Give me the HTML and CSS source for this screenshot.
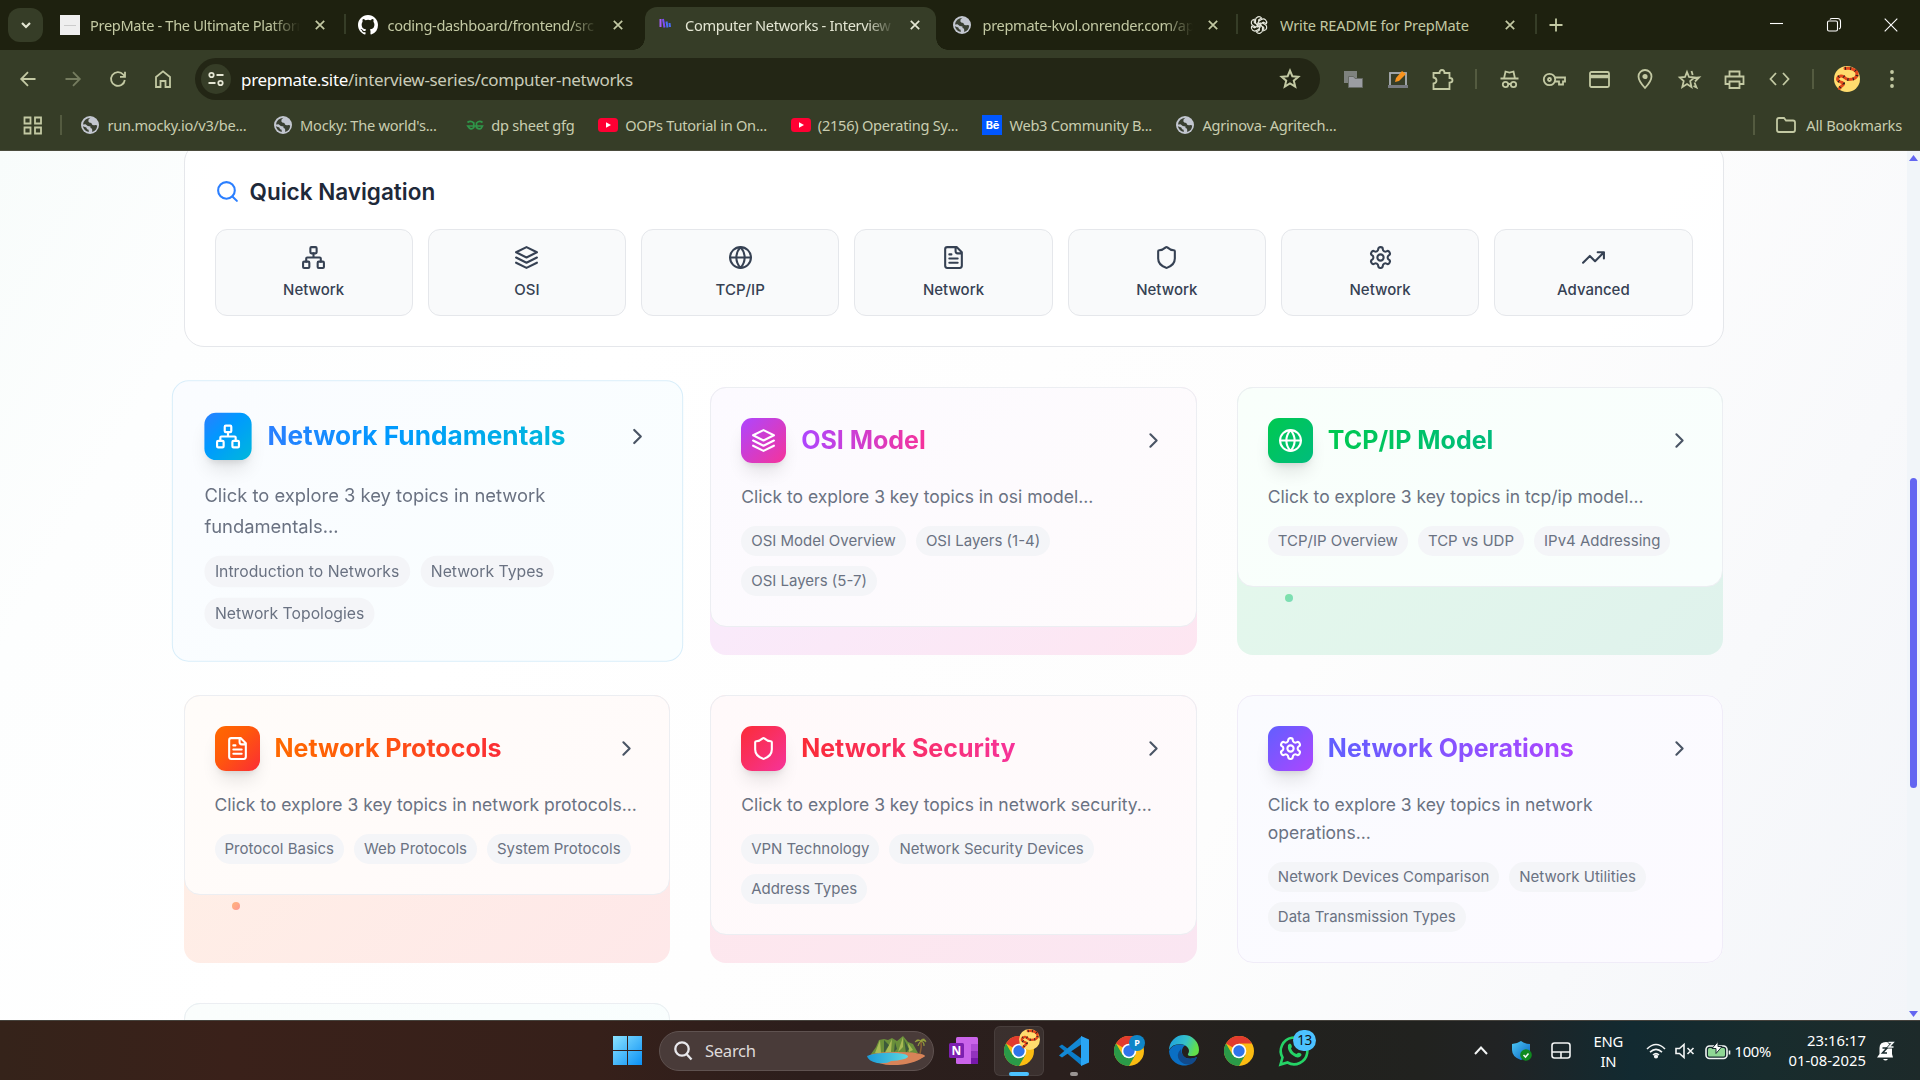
FILE: index.html
```html
<!DOCTYPE html>
<html lang="en">
<head>
<meta charset="utf-8">
<title>Computer Networks - Interview Series</title>
<link rel="stylesheet" href="styles.css">
</head>
<body>
<svg class="defs" aria-hidden="true">
  <defs>
    <linearGradient id="g-win" x1="0" y1="0" x2="1" y2="1"><stop offset="0" stop-color="#8be3ff"/><stop offset="1" stop-color="#0a90f5"/></linearGradient>
    <linearGradient id="g-edge" x1="0" y1="0" x2="1" y2="0.3"><stop offset="0" stop-color="#1b9de2"/><stop offset=".6" stop-color="#35c1c9"/><stop offset="1" stop-color="#62e04a"/></linearGradient>
    <linearGradient id="g-shield" x1="0" y1="0" x2="1" y2="1"><stop offset="0" stop-color="#4cc8f5"/><stop offset="1" stop-color="#0a62c0"/></linearGradient>
    <linearGradient id="g-lake" x1="0" y1="0" x2="1" y2="0"><stop offset="0" stop-color="#1a9bd8"/><stop offset="1" stop-color="#5fd8e0"/></linearGradient>
  </defs>
  <symbol id="network" viewBox="0 0 24 24"><rect x="16" y="16" width="6" height="6" rx="1"/><rect x="2" y="16" width="6" height="6" rx="1"/><rect x="9" y="2" width="6" height="6" rx="1"/><path d="M5 16v-3a1 1 0 0 1 1-1h12a1 1 0 0 1 1 1v3M12 12V8"/></symbol>
  <symbol id="layers" viewBox="0 0 24 24"><path d="M12 2 2 7l10 5 10-5-10-5ZM2 17l10 5 10-5M2 12l10 5 10-5"/></symbol>
  <symbol id="globe" viewBox="0 0 24 24"><circle cx="12" cy="12" r="10"/><path d="M2 12h20M12 2a15.3 15.3 0 0 1 4 10 15.3 15.3 0 0 1-4 10 15.3 15.3 0 0 1-4-10 15.3 15.3 0 0 1 4-10z"/></symbol>
  <symbol id="file" viewBox="0 0 24 24"><path d="M15 2H6a2 2 0 0 0-2 2v16a2 2 0 0 0 2 2h12a2 2 0 0 0 2-2V7ZM14 2v4a2 2 0 0 0 2 2h4M10 9H8M16 13H8M16 17H8"/></symbol>
  <symbol id="shield" viewBox="0 0 24 24"><path d="M20 13c0 5-3.5 7.5-7.66 8.95a1 1 0 0 1-.67-.01C7.5 20.5 4 18 4 13V6a1 1 0 0 1 1-1c2 0 4.5-1.2 6.24-2.72a1.17 1.17 0 0 1 1.52 0C14.51 3.81 17 5 19 5a1 1 0 0 1 1 1z"/></symbol>
  <symbol id="gear" viewBox="0 0 24 24"><path d="M12.22 2h-.44a2 2 0 0 0-2 2v.18a2 2 0 0 1-1 1.73l-.43.25a2 2 0 0 1-2 0l-.15-.08a2 2 0 0 0-2.73.73l-.22.38a2 2 0 0 0 .73 2.73l.15.1a2 2 0 0 1 1 1.72v.51a2 2 0 0 1-1 1.74l-.15.09a2 2 0 0 0-.73 2.73l.22.38a2 2 0 0 0 2.73.73l.15-.08a2 2 0 0 1 2 0l.43.25a2 2 0 0 1 1 1.73V20a2 2 0 0 0 2 2h.44a2 2 0 0 0 2-2v-.18a2 2 0 0 1 1-1.73l.43-.25a2 2 0 0 1 2 0l.15.08a2 2 0 0 0 2.73-.73l.22-.39a2 2 0 0 0-.73-2.73l-.15-.08a2 2 0 0 1-1-1.74v-.5a2 2 0 0 1 1-1.74l.15-.09a2 2 0 0 0 .73-2.73l-.22-.38a2 2 0 0 0-2.73-.73l-.15.08a2 2 0 0 1-2 0l-.43-.25a2 2 0 0 1-1-1.73V4a2 2 0 0 0-2-2z"/><circle cx="12" cy="12" r="3"/></symbol>
  <symbol id="trend" viewBox="0 0 24 24"><path d="m22 7-8.5 8.5-5-5L2 17M16 7h6v6"/></symbol>
  <symbol id="search" viewBox="0 0 24 24"><circle cx="11" cy="11" r="8"/><path d="m21 21-4.3-4.3"/></symbol>
  <symbol id="chevron" viewBox="0 0 24 24"><path d="m9 18 6-6-6-6"/></symbol>
  <symbol id="x" viewBox="0 0 10 10"><path d="m.8.8 8.4 8.4M9.2.8.8 9.2"/></symbol>
  <symbol id="world" viewBox="0 0 18 18"><circle cx="9" cy="9" r="9" fill="#c3c7d0" stroke="none"/><path d="M9.500 1.800Q7 3 7.300 5.200q.4 1.700 3 1.800.6 2.600 3 2.300 1.700-.5 2.900.2-.3 5-5 6.500v-2.200q0-1.400-1.700-1.700V10.500q-3 0-5-2.300L2 8.500Q2.800 2.500 9.500 1.800zM1.900 10.200l3.400 1.200q.5 2.200 2.300 2.300l.2 2.300Q2.800 15 1.900 10.200z" fill="#3a4032" stroke="none"/></symbol>
  <symbol id="yt" viewBox="0 0 20 14"><rect width="20" height="14" rx="3.500" fill="#f03" stroke="none"/><path d="M8 4.200v5.600L13 7z" fill="#fff" stroke="none"/></symbol>
  <symbol id="chrome" viewBox="0 0 30 30"><circle cx="15" cy="15" r="15" fill="#fbbc12"/><path d="M15 15 2 7.500A15 15 0 0 1 28 7.500H15z" fill="#e23b2e"/><path d="M2 7.500A15 15 0 0 0 15 30l6.500-11.200L15 15 8.500 18.700z" fill="#2a9a48"/><circle cx="15" cy="15" r="7.300" fill="#fff"/><circle cx="15" cy="15" r="5.700" fill="#2f74ea"/></symbol>
  <symbol id="snake" viewBox="0 0 26 26"><circle cx="13" cy="13" r="13" fill="#ffdc6e" stroke="none"/><path d="M11 2.500c5-1 11.500 1 12 5s-3 6-8 6-4-4-8-3.500-4.500 4-1.500 5.500 4 1 4 2.500-3 2-4 4.500" fill="none" stroke="#e2481c" stroke-width="3" stroke-linecap="round"/><path d="M11 2.500c5-1 11.500 1 12 5s-3 6-8 6-4-4-8-3.500-4.500 4-1.500 5.500 4 1 4 2.500-3 2-4 4.500" fill="none" stroke="#26221f" stroke-width="3" stroke-dasharray="1 4.200"/></symbol>
</svg>

<header class="browser">
  <div class="tabstrip">
    <div class="tab-search"><svg width="10" height="7" viewBox="0 0 10 7"><path d="m1 1 4 4 4-4"/></svg></div>
    <div class="tab"><span class="fav"><span class="blank-fav"></span></span><span class="title">PrepMate - The Ultimate Platform</span><svg class="close"><use href="#x"/></svg></div>
    <div class="tab split"><span class="fav"><svg class="solid" width="20" height="20" viewBox="0 0 16 16"><path fill="#fff" d="M8 0C3.580 0 0 3.580 0 8c0 3.540 2.290 6.530 5.470 7.590.4.070.55-.17.55-.38 0-.19-.01-.82-.01-1.490-2.010.37-2.530-.49-2.690-.94-.09-.23-.48-.94-.82-1.130-.28-.15-.68-.52-.01-.53.63-.01 1.080.58 1.230.82.72 1.210 1.870.87 2.330.66.07-.52.28-.87.51-1.070-1.780-.2-3.640-.89-3.640-3.950 0-.87.31-1.590.82-2.150-.08-.2-.36-1.020.08-2.120 0 0 .67-.21 2.200.82a7.600 7.600 0 0 1 4 0c1.530-1.040 2.200-.82 2.200-.82.44 1.100.16 1.920.08 2.120.51.56.82 1.270.82 2.150 0 3.070-1.870 3.750-3.650 3.950.29.25.54.73.54 1.480 0 1.070-.01 1.930-.01 2.200 0 .21.15.46.55.38A8 8 0 0 0 16 8c0-4.420-3.580-8-8-8z"/></svg></span><span class="title">coding-dashboard/frontend/src at</span><svg class="close"><use href="#x"/></svg></div>
    <div class="tab active"><span class="fav"><svg width="14" height="18" viewBox="0 0 14 18"><path d="M1.500 3v8" stroke="#a45cf5" stroke-width="2"/><path d="m4 3 1.500 8.500" stroke="#7a4df5" stroke-width="2"/><path d="m7.500 5.500 1 6M10.500 7l.5 4" stroke="#4a6cf5" stroke-width="2"/></svg></span><span class="title">Computer Networks - Interview Series</span><svg class="close"><use href="#x"/></svg></div>
    <div class="tab"><span class="fav"><svg width="18" height="18"><use href="#world"/></svg></span><span class="title">prepmate-kvol.onrender.com/api/</span><svg class="close"><use href="#x"/></svg></div>
    <div class="tab split"><span class="fav"><svg width="18" height="18" viewBox="-9 -9 18 18"><g fill="none" stroke="#e8eadf" stroke-width="1.200"><path id="petal" d="M-3.500-1.800V-5A3.400 3.400 0 0 1 2.600-7L-.3-5.200V-1.500L3 .5"/><use href="#petal" transform="rotate(60)"/><use href="#petal" transform="rotate(120)"/><use href="#petal" transform="rotate(180)"/><use href="#petal" transform="rotate(240)"/><use href="#petal" transform="rotate(300)"/></g></svg></span><span class="title full">Write README for PrepMate</span><svg class="close"><use href="#x"/></svg></div>
    <div class="newtab"><svg width="14" height="14" viewBox="0 0 14 14"><path d="M7 .5v13M.5 7h13"/></svg></div>
    <div class="winctl">
      <svg width="14" height="14" viewBox="0 0 14 14"><path d="M0 5.500h13"/></svg>
      <svg width="14" height="14" viewBox="0 0 14 14"><rect x=".5" y="3" width="10" height="10" rx="1.500"/><path d="M3 1.500Q3.500.5 5 .5h5.500q3 0 3 3V9q0 1.500-1.500 2"/></svg>
      <svg width="14" height="14" viewBox="0 0 14 14"><path d="m.7.7 12.600 12.600M13.300.7.7 13.300"/></svg>
    </div>
  </div>

  <div class="toolbar">
    <div class="navs">
      <span><svg width="16" height="16" viewBox="0 0 16 16"><path d="M15.500 8H1.500M8 1.200 1.200 8 8 14.800"/></svg></span>
      <span class="dim"><svg width="16" height="16" viewBox="0 0 16 16"><path d="M.5 8h14M8 1.200 14.800 8 8 14.800"/></svg></span>
      <span><svg width="16" height="16" viewBox="0 0 16 16"><path d="M14.800 9A6.900 6.900 0 1 1 13.200 3.500L15 5.500M15 .8v5h-5"/></svg></span>
      <span><svg width="16" height="18" viewBox="0 0 16 18"><path d="M1 7l7-5.700L15 7v10h-4.500v-6h-5v6H1z"/></svg></span>
    </div>
    <div class="omnibox">
      <span class="siteinfo"><svg width="16" height="16" viewBox="0 0 16 16"><circle cx="3.500" cy="4" r="2.200"/><circle cx="12.500" cy="12" r="2.200"/><path d="M8.500 4H15.500M.5 12h7"/></svg></span>
      <span class="url"><b>prepmate.site</b>/interview-series/computer-networks</span>
      <svg class="star" width="20" height="20" viewBox="0 0 18 18"><path d="m9 1.500 2.100 5 5.400.5-4.100 3.500 1.300 5.300L9 13l-4.700 2.800 1.300-5.300L1.500 7l5.400-.5z"/></svg>
    </div>
    <div class="exts">
      <span><svg width="20" height="18" viewBox="0 0 20 18"><rect x="1" y="1" width="13" height="12" fill="#7e827e" stroke="none"/><path d="M5.500 6.500h5l1.500 2h7.500v9h-14z" fill="#9b9da2" stroke="#666a64" stroke-width="1"/></svg></span>
      <span><svg width="20" height="20" viewBox="0 0 20 20"><rect x="2" y="4" width="16" height="13" stroke="#aab0b6"/><path d="M0 17.500h20" stroke="#777a80" stroke-width="3"/><path d="m7 13 1-4 6-7 4 3-7 7z" fill="#f7931e" stroke="none"/></svg></span>
      <span><svg width="21" height="21" viewBox="0 0 21 21"><path d="M1.500 4h6q0-3 2.500-3t2.500 3h5v5q3 0 3 2.300t-3 2.300V20h-16v-5.500q3-.5 3-3t-3-3z"/></svg></span>
      <i></i>
      <span><svg width="19" height="19" viewBox="0 0 19 19"><path d="M.5 8.500h18M4 8.500 5.500 1.500 9.500 2.500l4-1 1.500 7M8 14h3"/><circle cx="5.500" cy="14.500" r="2.700"/><circle cx="13.500" cy="14.500" r="2.700"/></svg></span>
      <span><svg width="23" height="15" viewBox="0 0 23 15"><circle cx="6.500" cy="7.500" r="5.700"/><circle cx="6.500" cy="7.500" r="1.500"/><path d="M11.500 5.500H22v4h-2v3h-4v-3h-4.500"/></svg></span>
      <span><svg width="21" height="17" viewBox="0 0 21 17"><rect x="1" y="1" width="19" height="15" rx="1.500"/><path d="M1 5.500h19" stroke-width="3.500"/></svg></span>
      <span><svg width="16" height="20" viewBox="0 0 16 20"><path d="M8 19Q1.500 12 1.500 7.500a6.500 6.500 0 0 1 13 0Q14.500 12 8 19z"/><circle cx="8" cy="7.500" r="1.700" fill="#c3c9a3"/></svg></span>
      <span><svg width="21" height="19" viewBox="0 0 21 19"><path d="m8 2 2 5 5.500.5-4.300 3.600L12.500 17 8 14l-4.700 3 1.400-5.900L.8 7.500 6 7zM12.500 1l1.200 4M15 8l5-.5-4 4M15.500 12.500l2 5-3-1.500"/></svg></span>
      <span><svg width="21" height="19" viewBox="0 0 21 19"><path d="M5.500 6V1.500h10V6M5 14H1.500V6.500h18V14H16M5.500 11.500h10v6.500h-10z"/></svg></span>
      <span><svg width="21" height="14" viewBox="0 0 21 14"><path d="M7 1 1.500 7 7 13M14 1l5.500 6L14 13"/></svg></span>
      <i></i>
      <span><svg width="26" height="26"><use href="#snake"/></svg></span>
      <span><svg width="6" height="20" viewBox="0 0 6 20"><g fill="#c3c9a3" stroke="none"><circle cx="3" cy="3" r="1.900"/><circle cx="3" cy="10" r="1.900"/><circle cx="3" cy="17" r="1.900"/></g></svg></span>
    </div>
  </div>

  <div class="bookmarks">
    <svg class="apps" width="20" height="19" viewBox="0 0 20 19"><path d="M1.500 1.500h6v6h-6zM12 1.500h6v6h-6zM1.500 11.500h6v6h-6zM12 11.500h6v6h-6z"/></svg>
    <i></i>
    <ul>
      <li><svg><use href="#world"/></svg>run.mocky.io/v3/be...</li>
      <li><svg><use href="#world"/></svg>Mocky: The world's...</li>
      <li><svg class="gfg" viewBox="0 0 18 18"><path d="M1.500 6.500Q4.500 4 7.800 7v4.500q-3 3.500-6-1.500H16.500q-2 5-6 1.500V7q3-3 6-.5"/></svg>dp sheet gfg</li>
      <li class="yt"><svg><use href="#yt"/></svg>OOPs Tutorial in On...</li>
      <li class="yt"><svg><use href="#yt"/></svg>(2156) Operating Sy...</li>
      <li class="be"><span>Bē</span>Web3 Community B...</li>
      <li><svg><use href="#world"/></svg>Agrinova- Agritech...</li>
    </ul>
    <i></i>
    <div class="allbm"><svg width="20" height="16" viewBox="0 0 20 16"><path d="M1 13V3q0-2 2-2h5l2 2.500h7q2 0 2 2V13q0 2-2 2H3q-2 0-2-2z"/></svg>All Bookmarks</div>
  </div>
</header>

<main class="page">
  <section class="quick">
    <h3><svg class="ic"><use href="#search"/></svg>Quick Navigation</h3>
    <div class="quick-grid">
      <a><svg class="ic"><use href="#network"/></svg>Network</a>
      <a><svg class="ic"><use href="#layers"/></svg>OSI</a>
      <a><svg class="ic"><use href="#globe"/></svg>TCP/IP</a>
      <a><svg class="ic"><use href="#file"/></svg>Network</a>
      <a><svg class="ic"><use href="#shield"/></svg>Network</a>
      <a><svg class="ic"><use href="#gear"/></svg>Network</a>
      <a><svg class="ic"><use href="#trend"/></svg>Advanced</a>
    </div>
  </section>

  <div class="cards">
    <article class="card blue hovered"><div class="inner">
      <header><span class="badge"><svg class="ic"><use href="#network"/></svg></span><h4>Network Fundamentals</h4><svg class="ic go"><use href="#chevron"/></svg></header>
      <p>Click to explore 3 key topics in network fundamentals...</p>
      <div class="tags"><span>Introduction to Networks</span><span>Network Types</span><span>Network Topologies</span></div>
    </div></article>
    <article class="card purple"><div class="inner">
      <header><span class="badge"><svg class="ic"><use href="#layers"/></svg></span><h4>OSI Model</h4><svg class="ic go"><use href="#chevron"/></svg></header>
      <p>Click to explore 3 key topics in osi model...</p>
      <div class="tags"><span>OSI Model Overview</span><span>OSI Layers (1-4)</span><span>OSI Layers (5-7)</span></div>
    </div></article>
    <article class="card green"><div class="inner">
      <header><span class="badge"><svg class="ic"><use href="#globe"/></svg></span><h4>TCP/IP Model</h4><svg class="ic go"><use href="#chevron"/></svg></header>
      <p>Click to explore 3 key topics in tcp/ip model...</p>
      <div class="tags"><span>TCP/IP Overview</span><span>TCP vs UDP</span><span>IPv4 Addressing</span></div>
    </div><span class="dot"></span></article>
    <article class="card orange"><div class="inner">
      <header><span class="badge"><svg class="ic"><use href="#file"/></svg></span><h4>Network Protocols</h4><svg class="ic go"><use href="#chevron"/></svg></header>
      <p>Click to explore 3 key topics in network protocols...</p>
      <div class="tags"><span>Protocol Basics</span><span>Web Protocols</span><span>System Protocols</span></div>
    </div><span class="dot"></span></article>
    <article class="card red"><div class="inner">
      <header><span class="badge"><svg class="ic"><use href="#shield"/></svg></span><h4>Network Security</h4><svg class="ic go"><use href="#chevron"/></svg></header>
      <p>Click to explore 3 key topics in network security...</p>
      <div class="tags"><span>VPN Technology</span><span>Network Security Devices</span><span>Address Types</span></div>
    </div></article>
    <article class="card indigo"><div class="inner">
      <header><span class="badge"><svg class="ic"><use href="#gear"/></svg></span><h4>Network Operations</h4><svg class="ic go"><use href="#chevron"/></svg></header>
      <p>Click to explore 3 key topics in network operations...</p>
      <div class="tags"><span>Network Devices Comparison</span><span>Network Utilities</span><span>Data Transmission Types</span></div>
    </div></article>
    <article class="card teal"><div class="inner"></div></article>
  </div>
  <div class="scrollbar"><b class="up"></b><b class="thumb"></b><b class="down"></b></div>
</main>

<footer class="taskbar">
  <div class="apps-row">
    <svg class="win" width="29" height="29" viewBox="0 0 29 29"><path fill="url(#g-win)" d="M0 0h14v14H0zM15 0h14v14H15zM0 15h14v14H0zM15 15h14v14H15z"/></svg>
    <div class="tsearch">
      <svg width="19" height="20" viewBox="0 0 19 20"><circle cx="8" cy="8" r="6.700"/><path d="m12.500 13 5 5.500"/></svg>
      <span>Search</span>
      <svg class="island" width="60" height="30" viewBox="0 0 60 30"><path fill="#6a8f3a" d="M4 18 9 11 12 4l5-1 4 1 4-2 5 3 6-5 5 6 5 2 5 9z"/><path fill="#a9ba55" d="m13 4-5 13h6zM25 3l-7 14 6-1zM36 1l-5 15 5-5zM41 7l1 9 4-2z"/><path fill="#3c5a3b" d="m17 4 0 13 5-8zM37 3l2 14 3-4zM28 6l-1 10 3-3z"/><ellipse cx="30" cy="20" rx="28" ry="4" fill="#d88358"/><path fill="#d88358" d="M6 22q4 8 25 7 20-2 26-9z"/><path fill="url(#g-lake)" d="M0 20q10-4 30-3 12 1 11 4-3 3-17 4-4 3-14 2-9-2-10-7z"/><path d="M53 18q2-7 1-13" fill="none" stroke="#8a6034" stroke-width="1.500"/><path d="M54 5q-4-3-6 1 4-2 6-1-3 2-3 5 2-4 3-5 3 1 3 5 1-4-3-5 3-1 5 1-1-5-5-2z" fill="#9aa63c" stroke="#9aa63c" stroke-width=".6"/></svg>
    </div>
    <svg class="onenote" width="30" height="28" viewBox="0 0 30 28"><rect x="7" width="22" height="27" rx="1.500" fill="#ca64ea"/><path fill="#ae4bd5" d="M22 7h7v7h-7z"/><path fill="#9332bf" d="M22 14h7v7h-7z"/><path fill="#7719aa" d="M22 21h7v6h-7z"/><rect y="6" width="15" height="15" rx="1.500" fill="#7d1fb0"/><text x="7.500" y="18" text-anchor="middle">N</text></svg>
    <div class="task on"><svg width="30" height="30"><use href="#chrome"/></svg><svg class="sub" width="21" height="21"><use href="#snake"/></svg></div>
    <div class="task open"><svg width="30" height="30" viewBox="0 0 30 30"><path d="M0 10.500 3 8.500 23 23v7z" fill="#0b7dc9"/><path d="M0 19.500 3 21.500 23 8V0z" fill="#1389d6"/><path d="M22 0 30 3.500v23L22 30z" fill="#2aa5f5"/></svg></div>
    <div class="task"><svg width="30" height="30"><use href="#chrome"/></svg><b class="pbadge">P</b></div>
    <div class="task"><svg width="30" height="30" viewBox="0 0 30 30"><path fill="#0a6fc4" d="M0 15A15 15 0 0 0 19 29q7-2 9-8-6 3-11 1-5-3-4-8 1-4 4-5Q4 6 0 15z"/><path fill="url(#g-edge)" d="M0 14A15 15 0 0 1 30 14q0 6-7 6-5 0-4-2 2-3 0-6Q16 8 11 8 3 8 0 14z"/><path fill="#114a8b" d="M12 13q-6 6-1 12 5 5 12 3 4-3 5-7-6 3-11 1-5-3-5-9z"/></svg></div>
    <div class="task"><svg width="30" height="30"><use href="#chrome"/></svg></div>
    <div class="task"><svg width="30" height="30" viewBox="0 0 30 30"><path d="M1.500 28.500 3.500 21.500A13.300 13.300 0 1 1 8.500 26.500z" fill="none" stroke="#25d366" stroke-width="2.600"/><path d="M9 9q2-3 3.500 0 1 2-.5 3.500Q14 17 17.500 18q2-2 3.500-1 3 1.500 0 3.800-3 2-8-2T9 9z" fill="#25d366"/></svg><b class="count">13</b></div>
  </div>
  <div class="tray">
    <svg class="t1" width="14" height="9" viewBox="0 0 14 9"><path d="m1 8 6-6.500L13 8" stroke-width="2"/></svg>
    <svg class="t2" width="20" height="20" viewBox="0 0 20 20"><path d="M9 0q4 2.800 9 3v6q0 7-9 10-9-3-9-10V3q5-.2 9-3z" fill="url(#g-shield)" stroke="none"/><circle cx="14" cy="14" r="5.800" fill="#0f8a1f" stroke="none"/><path d="m11.500 14 2 2 3-3.500"/></svg>
    <svg class="t3" width="20" height="17" viewBox="0 0 20 17"><rect x="1" y="1" width="18" height="15" rx="2.500"/><path d="M1 10h18M10 10v6"/></svg>
    <div class="lang">ENG<br>IN</div>
    <svg class="t4" width="20" height="16" viewBox="0 0 20 16"><path d="M1 6Q10-3 19 6M4 9.200q6-5.600 12 0M7 12q3-2.700 6 0"/><circle cx="10" cy="13.500" r="1.300" fill="#fff"/></svg>
    <svg class="t5" width="20" height="16" viewBox="0 0 20 16"><path d="M1 5.500h3.500L9 1.500v13l-4.500-4H1zM12.500 5l6 6M18.500 5l-6 6"/></svg>
    <svg class="t6" width="26" height="18" viewBox="0 0 26 18"><rect x="1" y="4" width="21" height="12.500" rx="3.500"/><rect x="3" y="6" width="17" height="8.500" rx="1.500" fill="#8fd694" stroke="none"/><path d="M24.500 8.500v4"/><path d="m13-.5-6 7h4v5l6-7h-4z" fill="#fff" stroke="#1a2c2f" stroke-width="1"/></svg>
    <span class="pct">100%</span>
    <div class="clock">23:16:17<br>01-08-2025</div>
    <svg class="t7" width="18" height="20" viewBox="0 0 18 20"><path d="M0 16.500 2.500 13V7q0-6 6.500-6 6 0 6 6v6l1 3.500zM6 18q2.500 3 5 0z" fill="#fff" stroke="none"/><path d="M5.500 7h4.500l-4.500 5H10" stroke="#1a2c2f"/><path d="M11.500 1.500H16L12 6h4.500" stroke="#1a2c2f" stroke-width="3"/><path d="M11.500 1.500H16L12 6h4.500"/></svg>
  </div>
</footer>
</body>
</html>
```
FILE: styles.css
```css
* { box-sizing: border-box; }
body {
  margin: 0;
  width: 1920px;
  height: 1080px;
  overflow: hidden;
  display: flex;
  flex-direction: column;
  font-family: "Noto Sans", "Open Sans", sans-serif;
}
.defs { position: absolute; width: 0; height: 0; }
svg { flex: none; display: block; overflow: visible; }

/* Browser chrome */
.browser { height: 151px; flex: none; background: #363d27; color: #c9cdb0; border-bottom: 1px solid #4a4b3c; }
.browser svg { fill: none; stroke: #c3c9a3; stroke-width: 1.8; }
.browser svg.solid { stroke: none; }
.browser svg.gfg { stroke: #2f9549; stroke-width: 1.7; }
.tabstrip { height: 50px; background: #1e210f; display: flex; align-items: flex-start; font-size: 14.6px; position: relative; }
.tab-search { width: 35px; height: 34px; margin: 8px 4px 0 8px; border-radius: 12px; background: #363d27; display: grid; place-items: center; }
.tab-search svg { stroke: #e3e6d2; stroke-width: 2.2; }
.tab { width: 297.5px; height: 50px; padding-left: 13px; display: flex; align-items: center; position: relative; }
.tab .fav { width: 30px; flex: none; }
.tab .title { width: 210px; overflow: hidden; white-space: nowrap; letter-spacing: -.33px; color: #c3c9a3; -webkit-mask-image: linear-gradient(90deg, #000 86%, transparent); mask-image: linear-gradient(90deg, #000 86%, transparent); }
.tab .title.full { letter-spacing: -.18px; -webkit-mask-image: none; mask-image: none; }
.tab .close { width: 10px; height: 10px; margin-left: 15px; stroke-width: 1.7; }
.tab.split::before { content: ""; position: absolute; left: -1px; top: 14px; width: 2px; height: 20px; background: #363d27; }
.tab.active::before { content: ""; position: absolute; left: 3px; top: 7px; width: 291px; height: 43px; border-radius: 12px 12px 0 0; background: #363d27; }
.tab.active::after { content: ""; position: absolute; left: -9px; bottom: 0; width: 315px; height: 12px; background: radial-gradient(circle at 0 0, transparent 11.5px, #363d27 12px) 0 0 / 12px 12px no-repeat, radial-gradient(circle at 100% 0, transparent 11.5px, #363d27 12px) 100% 0 / 12px 12px no-repeat; }
.tab.active > * { position: relative; z-index: 1; }
.tab.active .title { color: #e4e6d3; }
.tab.active .close { stroke: #e4e6d3; }
.tab.active .fav { padding-left: 4px; }
.blank-fav { display: block; width: 20px; height: 20px; background: linear-gradient(#ccc, #ccc) 50% 50% / 12px 1px no-repeat #efefef; }
.newtab { width: 42px; height: 50px; display: grid; place-items: center; position: relative; }
.newtab::before { content: ""; position: absolute; left: 0; top: 14px; width: 2px; height: 20px; background: #363d27; }
.winctl { display: flex; gap: 43px; margin: 18px 22px 0 auto; }
.winctl svg { stroke: #fff; stroke-width: 1.1; }

.toolbar { height: 58px; padding-left: 5px; display: flex; align-items: center; }
.navs, .exts { display: flex; align-items: center; }
.navs span, .exts span { width: 45px; display: grid; place-items: center; }
.navs { width: 190px; }
.dim { opacity: .45; }
.omnibox { width: 1125px; height: 42px; border-radius: 21px; background: #232615; display: flex; align-items: center; padding: 0 20px 0 6px; }
.siteinfo { width: 30px; height: 30px; border-radius: 50%; background: #363d27; display: grid; place-items: center; margin-right: 10px; }
.siteinfo svg { stroke: #e4e6d3; }
.url { flex: 1; font-size: 17px; letter-spacing: -.32px; color: #c9cbb8; }
.url b { font-weight: 400; color: #fff; }
.exts { padding-left: 10px; }
.exts i, .bookmarks i { width: 2px; height: 20px; background: #545b40; }
.exts i { margin: 0 10px; }

.bookmarks { height: 34px; display: flex; align-items: center; padding: 0 18px 0 23px; font-size: 14.6px; letter-spacing: -.25px; }
.bookmarks ul { display: flex; list-style: none; margin: 0; padding: 0 0 0 18px; flex: 1; }
.apps { margin-right: 17px; }
.bookmarks li { width: 192.6px; display: flex; align-items: center; white-space: nowrap; }
.bookmarks li svg { width: 18px; height: 18px; margin: 0 8.5px 0 1px; }
.bookmarks li:nth-child(3) { width: 132px; }
.bookmarks li:nth-child(3) svg { margin-right: 7px; }
.bookmarks .yt svg { width: 20px; height: 14px; margin-right: 7px; }
.be span { width: 20px; height: 20px; margin-right: 7px; background: #0057ff; color: #fff; font: 700 11px/20px Inter, sans-serif; text-align: center; }
.allbm { display: flex; align-items: center; gap: 10px; margin-left: 21px; letter-spacing: -.2px; }

/* Page */
.page { height: 869px; flex: none; overflow: hidden; position: relative; font-family: Inter, sans-serif; background: linear-gradient(120deg, #f8fcfb 0, #fdfefe 12%, #fff 30%, #fdfdfd 66%, #f8f9fb 84%, #f3f5f9 100%); padding: 0 196.5px 0 183.5px; }
.ic { width: 25px; height: 25px; fill: none; stroke: currentColor; stroke-width: 2; stroke-linecap: round; stroke-linejoin: round; }
.quick { height: 205px; margin-top: -9px; padding: 30px; border: 1px solid #e5e7eb; border-radius: 20px; background: #ffffffcc; }
.quick h3 { margin: 1px 0 20px; display: flex; gap: 10px; align-items: center; font-size: 22.5px; line-height: 35px; font-weight: 600; color: #1e2939; }
.quick h3 .ic { color: #2b7fff; }
.quick-grid { display: grid; grid-template-columns: repeat(7, 1fr); gap: 15px; }
.quick-grid a { height: 87px; border: 1px solid #e5e7eb; border-radius: 12px; background: #f9fafb; display: flex; flex-direction: column; align-items: center; gap: 10px; padding-top: 15px; font-size: 15px; line-height: 20px; font-weight: 500; color: #364153; }

.cards { display: grid; grid-template-columns: repeat(3, 1fr); grid-auto-rows: 268px; gap: 40px; margin-top: 40px; }
.card { position: relative; border-radius: 16px; background: linear-gradient(135deg, var(--t1), var(--t2)); }
.inner { position: relative; border: 1px solid #eceef2; border-radius: 16px; padding: 30px; background: linear-gradient(135deg, var(--w1), var(--w2)); }
.inner header { display: flex; align-items: center; height: 45px; }
.badge { width: 45px; height: 45px; border-radius: 11px; display: grid; place-items: center; color: #fff; background: linear-gradient(135deg, var(--g)); box-shadow: 0 12px 18px -4px #0000001c, 0 5px 7px -4px #0000001c; }
.inner h4 { margin: 0 auto 0 15px; font-size: 25px; line-height: 35px; font-weight: 700; color: transparent; background: linear-gradient(90deg, var(--g)); -webkit-background-clip: text; background-clip: text; }
.go { color: #4a5565; }
.inner p { margin: 20.3px 0 15px; font-size: 17.5px; line-height: 28px; color: #6a7282; }
.tags { display: flex; flex-wrap: wrap; gap: 10px; }
.tags span { height: 30px; padding: 0 10px; border-radius: 15px; background: #f4f5f8; font-size: 15px; line-height: 30px; color: #6a7282; }
.dot { position: absolute; left: 48px; top: 206.5px; width: 8px; height: 8px; border-radius: 50%; background: linear-gradient(135deg, var(--g)); opacity: .45; }
.hovered { transform: scale(1.05); }
.hovered .inner, .indigo .inner { height: 100%; }
.hovered .inner { border-color: #d9eefa; }
.hovered .inner p { line-height: 28.5px; margin: 20px 0 13.5px; }
.blue { --g: #2b7fff, #0099ff 40%, #00b8db; --t1: #fff; --t2: #fff; --w1: #fafcff; --w2: #f9feff; }
.purple { --g: #ad46ff, #f6339a; --t1: #f7ecff; --t2: #fde6f1; --w1: #fcfaff; --w2: #fefbfc; }
.green { --g: #00c950, #00bc7d; --t1: #e5f9ec; --t2: #dff2ec; --w1: #f9fffb; --w2: #f9fefd; }
.orange { --g: #ff6900, #ff5a0a 40%, #fb2c36; --t1: #fff0e5; --t2: #fee8e9; --w1: #fffcf9; --w2: #fffafa; }
.red { --g: #fb2c36, #f6339a; --t1: #ffe8ec; --t2: #fae6f2; --w1: #fff9fa; --w2: #fefafc; }
.indigo { --g: #615fff, #ad46ff; --t1: #fff; --t2: #fff; --w1: #fafbff; --w2: #fcfaff; }
.indigo .inner { border-color: #f0ecf8; }
.teal { --g: #00bba7, #00b8db; --t1: #e6f8f6; --t2: #e6f8f6; --w1: #fafdfc; --w2: #f8fefe; }
.teal .inner { height: 200px; }

.scrollbar { position: absolute; right: 0; top: 0; width: 13px; height: 869px; background: #f1f5f9; }
.scrollbar b { position: absolute; left: 3px; }
.thumb { top: 327px; width: 7px; height: 310px; border-radius: 4px; background: #6366f1; }
.up, .down { width: 9px; height: 6px; margin-left: -1px; background: #6366f1; }
.up { top: 4px; clip-path: polygon(50% 0, 100% 100%, 0 100%); }
.down { top: 860px; clip-path: polygon(0 0, 100% 0, 50% 100%); }

/* Taskbar */
.taskbar { height: 60px; flex: none; position: relative; border-top: 1px solid #45423c; background: linear-gradient(90deg, #35231a 0, #3a211a 12%, #36201a 31%, #2c1e1c 42%, #2a1f1d 55%, #22211e 66%, #21221f 74%, #212324 78%, #122a31 85%, #182c2d 92%, #1d2a2a 100%); color: #fff; }
.apps-row { display: flex; align-items: center; height: 59px; padding-left: 613px; }
.tsearch { width: 275px; height: 40px; margin: 0 15px 0 17px; border-radius: 20px; background: #493b39; border: 1px solid #5f5250; display: flex; align-items: center; padding: 0 6px 0 14px; font-size: 16.6px; color: #dedad9; }
.tsearch > svg:first-child { fill: none; stroke: #e8e8ec; stroke-width: 2.3; }
.tsearch span { margin: 0 auto 0 12px; letter-spacing: -.3px; }
.onenote { margin-right: 15px; }
.onenote text { font: 700 12px "Open Sans", sans-serif; fill: #fff; }
.task { width: 50px; height: 50px; margin-right: 5px; border-radius: 6px; display: grid; place-items: center; position: relative; }
.task.on { background: #ffffff14; box-shadow: inset 0 0 0 1px #ffffff12; }
.task.on::after, .task.open::after { content: ""; position: absolute; bottom: 0; width: 20px; height: 4px; border-radius: 2px; background: #4cc2ff; }
.task.open::after { width: 8px; background: #9b9593; }
.sub { position: absolute; left: 25px; top: 3px; }
.pbadge, .count { position: absolute; display: grid; place-items: center; border-radius: 50%; font-weight: 400; }
.pbadge { left: 25px; top: 9px; width: 16px; height: 16px; font-size: 9px; font-weight: 700; background: #0f86c8; }
.count { left: 24px; top: 4px; height: 21px; width: 23px; border-radius: 11px; font-size: 13.5px; letter-spacing: -.5px; background: #4cc2ff; color: #111; }
.tray { position: absolute; right: 25px; top: 0; height: 59px; width: 421px; display: flex; align-items: center; font-size: 14.8px; line-height: 20px; letter-spacing: -.3px; }
.tray svg { fill: none; stroke: #f2f4f4; stroke-width: 1.6; }
.t2 { margin-left: 24px; }
.t3 { margin-left: 19px; }
.lang { width: 76px; text-align: center; }
.t5 { margin-left: 9px; }
.t6 { margin-left: 10px; }
.pct { width: 44px; margin-left: 4px; }
.clock { width: 90px; text-align: right; letter-spacing: .02px; position: relative; top: -1px; }
.t7 { margin-left: 11px; }
```
